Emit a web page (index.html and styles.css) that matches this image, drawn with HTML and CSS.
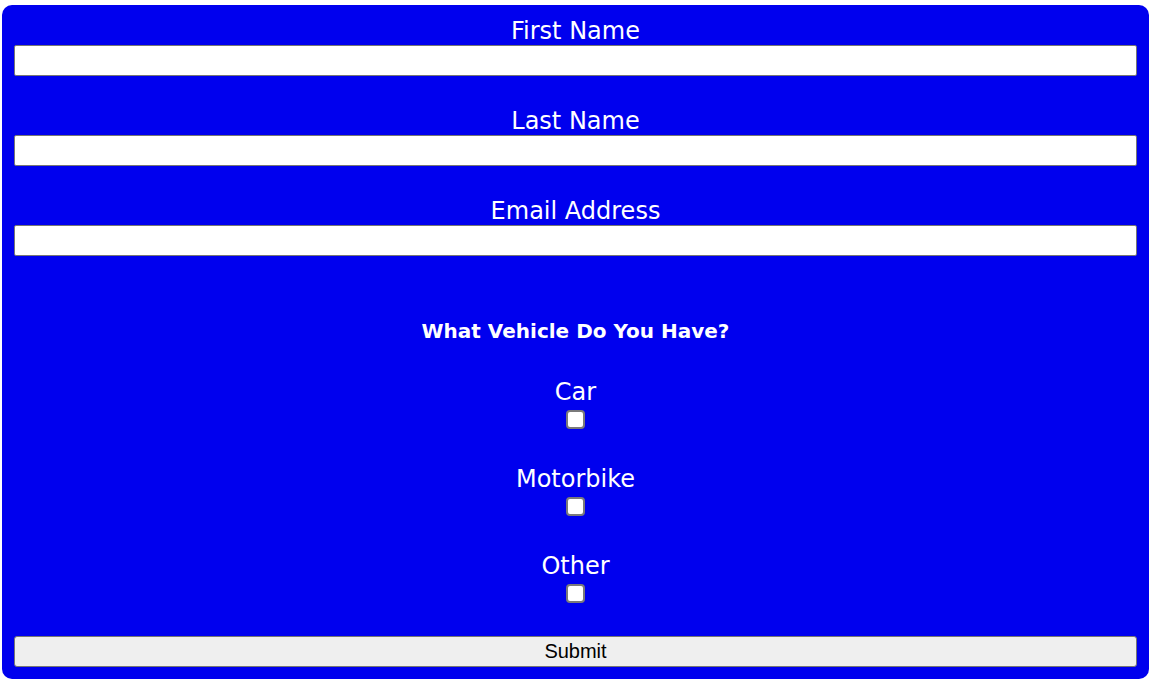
FILE: index.html
```html
<!DOCTYPE html>
<html lang="en">
<head>
<meta charset="utf-8">
<title>Vehicle Form</title>
<link rel="stylesheet" href="styles.css">
</head>
<body>
<form class="form">
  <div class="fields">
    <div class="field">
      <label class="field-label" for="first">First Name</label>
      <input class="text-input" id="first" type="text">
    </div>
    <div class="field">
      <label class="field-label" for="last">Last Name</label>
      <input class="text-input" id="last" type="text">
    </div>
    <div class="field">
      <label class="field-label" for="email">Email Address</label>
      <input class="text-input" id="email" type="email">
    </div>
  </div>
  <h3 class="question">What Vehicle Do You Have?</h3>
  <div class="options">
    <div class="option">
      <label class="field-label" for="car">Car</label>
      <input class="check" id="car" type="checkbox">
    </div>
    <div class="option">
      <label class="field-label" for="bike">Motorbike</label>
      <input class="check" id="bike" type="checkbox">
    </div>
    <div class="option">
      <label class="field-label" for="other">Other</label>
      <input class="check" id="other" type="checkbox">
    </div>
  </div>
  <button class="submit" type="submit">Submit</button>
</form>
</body>
</html>
```
FILE: styles.css
```css
html, body {
  margin: 0;
  padding: 0;
  background: #ffffff;
}

.form {
  margin: 5px 0 0 2px;
  width: 1147px;
  box-sizing: border-box;
  padding: 12px 12px 12px;
  background: #0000ee;
  border-radius: 10px;
  color: #ffffff;
  font-family: "DejaVu Sans", Verdana, sans-serif;
  display: flex;
  flex-direction: column;
}

.fields {
  display: flex;
  flex-direction: column;
  gap: 31px;
}

.field {
  display: flex;
  flex-direction: column;
  text-align: center;
}

.field-label {
  display: block;
  height: 28px;
  font-size: 24px;
  line-height: 28px;
  text-align: center;
}

.text-input {
  display: block;
  height: 31px;
  box-sizing: border-box;
  margin: 0;
  border: 1px solid #767676;
  border-radius: 2px;
  background: #ffffff;
  padding: 1px 2px;
}

.question {
  margin: 64px 0 0;
  height: 23px;
  font-size: 20px;
  font-weight: bold;
  line-height: 23px;
  text-align: center;
}

.options {
  margin-top: 35px;
  display: flex;
  flex-direction: column;
  gap: 36px;
}

.option {
  display: flex;
  flex-direction: column;
  align-items: center;
}

.check {
  appearance: none;
  -webkit-appearance: none;
  display: block;
  box-sizing: border-box;
  width: 19px;
  height: 19px;
  margin: 4px 0 0;
  border: 2px solid #7a7a7a;
  border-radius: 4px;
  background: #ffffff;
}

.submit {
  display: block;
  margin-top: 33px;
  height: 31px;
  box-sizing: border-box;
  border: 1px solid #767676;
  border-radius: 3px;
  background: #efefef;
  color: #000000;
  font-family: "Liberation Sans", Arial, sans-serif;
  font-size: 20px;
  padding: 0;
}
```
